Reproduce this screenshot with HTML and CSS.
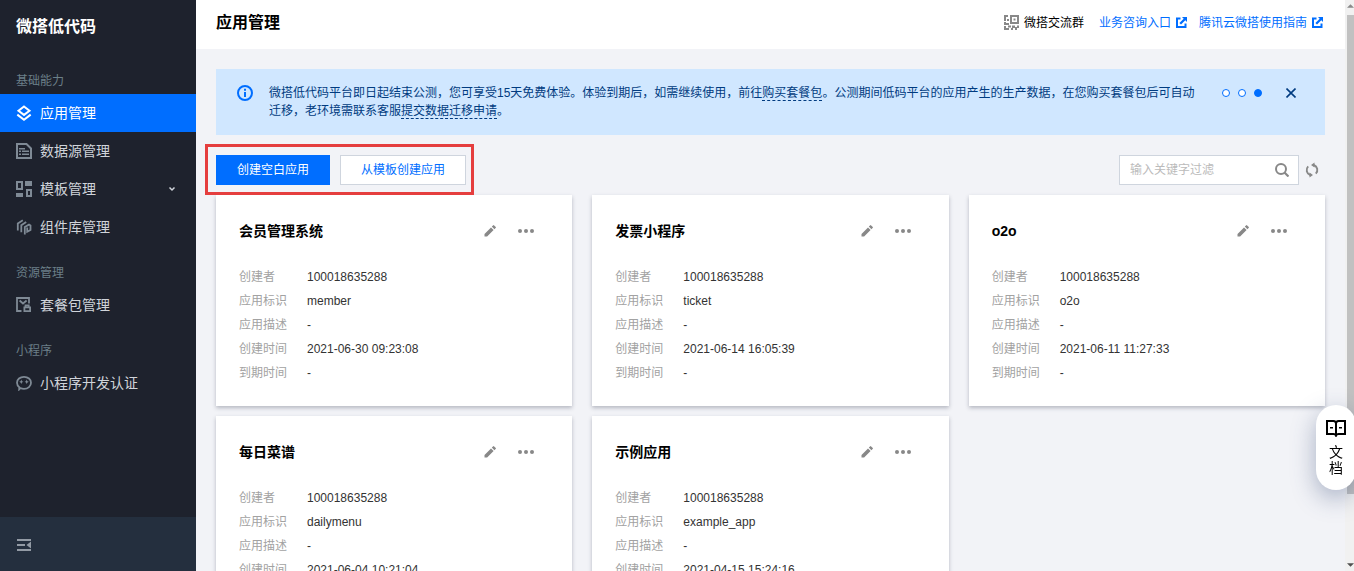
FILE: index.html
```html
<!DOCTYPE html>
<html lang="zh-CN">
<head>
<meta charset="utf-8">
<title>应用管理 - 微搭低代码</title>
<link rel="stylesheet" href="styles.css">
</head>
<body>
<svg class="sprite" aria-hidden="true">
  <symbol id="i-pencil" viewBox="0 0 12 12"><path d="M.5 11.5v-2.6L7 2.4 9.6 5 3.1 11.5zM7.8 1.6 9.3.2q.3-.3.6 0l1.9 1.9q.3.3 0 .6l-1.4 1.5z"/></symbol>
  <symbol id="i-more" viewBox="0 0 16 4"><circle cx="2" cy="2" r="2"/><circle cx="8" cy="2" r="2"/><circle cx="14" cy="2" r="2"/></symbol>
  <symbol id="i-external" viewBox="0 0 11 11"><path d="M0 .5h4.500v2H2v6.500h6.500V6.500h2V11H0zM6 0h5v5L9.300 3.300 5 7.600 3.400 6l4.300-4.300z"/></symbol>
</svg>
<div class="app">
  <aside class="sidebar">
    <h1 class="brand">微搭低代码</h1>
    <nav class="nav">
      <h2 class="nav-label">基础能力</h2>
      <a class="nav-item active" href="#"><svg class="nav-icon" viewBox="0 0 16 16"><g fill="none" stroke="currentColor" stroke-width="2"><path d="M8 1.500 13.500 5.700 8 9.900 2.500 5.700z"/><path d="M1.300 9.600 8 14.700l6.700-5.100"/></g></svg>应用管理</a>
      <a class="nav-item" href="#"><svg class="nav-icon" viewBox="0 0 16 16"><path d="M1 1h9.500L15 5.500V15H1z" fill="none" stroke="currentColor" stroke-width="2"/><path d="M3 5h6v1.500H3zM3 7.500h2V9H3zM6 7.500h7V9H6zM3 10.500h2V12H3zM6 10.500h7V12H6z"/></svg>数据源管理</a>
      <a class="nav-item" href="#"><svg class="nav-icon" viewBox="0 0 16 16"><path d="M1 1h5v7H1zM11 9h4v6h-4z" fill="none" stroke="currentColor" stroke-width="2"/><path d="M9 0h7v5H9zM0 12h7v4H0z"/></svg>模板管理<svg class="chevron" viewBox="0 0 8 8"><path d="m1.500 2.500 2.500 2.500 2.500-2.500" fill="none" stroke="currentColor" stroke-width="1.500"/></svg></a>
      <a class="nav-item" href="#"><svg class="nav-icon" viewBox="0 0 16 16"><g fill="none" stroke="currentColor" stroke-width="1.800"><path d="M1.800 11.500V4.500L6.800 1.300M5.300 13.300V6.300l4.900-3.300M8.800 15.500V8l4.200-2.400 1.500.9v4.500l-3.300 1.800V8.500"/></g></svg>组件库管理</a>
      <h2 class="nav-label">资源管理</h2>
      <a class="nav-item" href="#"><svg class="nav-icon" viewBox="0 0 16 16"><g fill="none" stroke="currentColor" stroke-width="1.800"><path d="M5.500 14H1V1h12v5.500M3.600 3.500 7 6.500l3.600-3"/><path d="M8.400 10.400h5.700v3.700H8.400zM9.500 10V8.400h3.200V10"/></g></svg>套餐包管理</a>
      <h2 class="nav-label">小程序</h2>
      <a class="nav-item" href="#"><svg class="nav-icon" viewBox="0 0 16 16"><path d="M3.200 14.300 4.400 13c1 .5 2.200.8 3.600.8 4 0 7-2.600 7-6s-3-6-7-6-7 2.600-7 6c0 1.800.9 3.300 2.300 4.400z" fill="none" stroke="currentColor" stroke-width="1.800"/><path d="M5.300 4.600 6 6.200l1.400.6L6 7.400l-.7 1.600-.7-1.600-1.400-.6 1.400-.6zM10.700 4.600l.7 1.600 1.400.6-1.400.6-.7 1.600-.7-1.600-1.400-.6 1.400-.6z"/></svg>小程序开发认证</a>
    </nav>
    <div class="sidebar-foot">
      <button class="icon-btn" aria-label="收起菜单"><svg class="fold" viewBox="0 0 14 12"><path d="M0 0h14v2H0zM0 5h8v2H0zM0 10h14v2H0zM14 2.500v7L9.500 6z"/></svg></button>
    </div>
  </aside>

  <main class="main">
    <header class="topbar">
      <h2 class="page-title">应用管理</h2>
      <div class="top-links">
        <a class="top-link plain" href="#"><svg class="qr" viewBox="0 0 15 15"><path d="M0 0h4v2H2v4H0zM0 7h2v1h3v2H0zM6 0h9v9H6zm2 2v5h5V2zM9.500 3.500h2v2h-2zM3 4h2v2H3zM0 11h2v2h3v2H0zM4 10.500h3v2H4zM8 10.500h3V12h2v-1.500h2V13h-2v2h-2v-2H9v2H7v-2h1z" fill-rule="evenodd"/></svg>微搭交流群</a>
        <a class="top-link" href="#">业务咨询入口<svg class="ext"><use href="#i-external"/></svg></a>
        <a class="top-link" href="#">腾讯云微搭使用指南<svg class="ext"><use href="#i-external"/></svg></a>
      </div>
    </header>

    <div class="content">
      <section class="notice">
        <svg class="info" viewBox="0 0 16 16"><circle cx="8" cy="8" r="7" fill="none" stroke="currentColor" stroke-width="2"/><path d="M7 3.800h2v2H7zM7 7h2v5H7z"/></svg>
        <p class="notice-text">微搭低代码平台即日起结束公测，您可享受15天免费体验。体验到期后，如需继续使用，前往<a href="#">购买套餐包</a>。公测期间低码平台的应用产生的生产数据，在您购买套餐包后可自动迁移，老环境需联系客服<a href="#">提交数据迁移申请</a>。</p>
        <div class="dots">
          <button class="dot" aria-label="第1条"></button>
          <button class="dot" aria-label="第2条"></button>
          <button class="dot on" aria-label="第3条"></button>
        </div>
        <button class="icon-btn close" aria-label="关闭"><svg viewBox="0 0 10 10"><path d="m.5.5 9 9m0-9-9 9" fill="none" stroke="currentColor" stroke-width="1.600"/></svg></button>
      </section>

      <div class="toolbar">
        <div class="create-group">
          <button class="btn primary">创建空白应用</button>
          <button class="btn">从模板创建应用</button>
        </div>
        <div class="search-group">
          <div class="search">
            <input type="search" aria-label="输入关键字过滤" placeholder="输入关键字过滤">
            <button class="icon-btn" aria-label="搜索"><svg class="lens" viewBox="0 0 14 14"><circle cx="6" cy="6" r="5" fill="none" stroke="currentColor" stroke-width="2"/><path d="m9.500 9.500 4 4" stroke="currentColor" stroke-width="2.200"/></svg></button>
          </div>
          <button class="icon-btn refresh" aria-label="刷新"><svg viewBox="0 0 14 16"><path d="M5.200 13A5.200 5.200 0 0 1 3.200 4.400M8.800 3a5.200 5.200 0 0 1 2 8.600" fill="none" stroke="currentColor" stroke-width="1.900"/><path d="M4.500.5v5.100L8 2.900zM9.500 15.500v-5.100L6 13.100z" transform="matrix(-1 0 0 1 14 0)"/></svg></button>
        </div>
      </div>

      <div class="cards">
        <article class="card">
          <div class="card-head"><h3>会员管理系统</h3><button class="icon-btn" aria-label="编辑"><svg class="pencil"><use href="#i-pencil"/></svg></button><button class="icon-btn" aria-label="更多"><svg class="more"><use href="#i-more"/></svg></button></div>
          <dl><dt>创建者</dt><dd>100018635288</dd><dt>应用标识</dt><dd>member</dd><dt>应用描述</dt><dd>-</dd><dt>创建时间</dt><dd>2021-06-30 09:23:08</dd><dt>到期时间</dt><dd>-</dd></dl>
        </article>
        <article class="card">
          <div class="card-head"><h3>发票小程序</h3><button class="icon-btn" aria-label="编辑"><svg class="pencil"><use href="#i-pencil"/></svg></button><button class="icon-btn" aria-label="更多"><svg class="more"><use href="#i-more"/></svg></button></div>
          <dl><dt>创建者</dt><dd>100018635288</dd><dt>应用标识</dt><dd>ticket</dd><dt>应用描述</dt><dd>-</dd><dt>创建时间</dt><dd>2021-06-14 16:05:39</dd><dt>到期时间</dt><dd>-</dd></dl>
        </article>
        <article class="card">
          <div class="card-head"><h3>o2o</h3><button class="icon-btn" aria-label="编辑"><svg class="pencil"><use href="#i-pencil"/></svg></button><button class="icon-btn" aria-label="更多"><svg class="more"><use href="#i-more"/></svg></button></div>
          <dl><dt>创建者</dt><dd>100018635288</dd><dt>应用标识</dt><dd>o2o</dd><dt>应用描述</dt><dd>-</dd><dt>创建时间</dt><dd>2021-06-11 11:27:33</dd><dt>到期时间</dt><dd>-</dd></dl>
        </article>
        <article class="card">
          <div class="card-head"><h3>每日菜谱</h3><button class="icon-btn" aria-label="编辑"><svg class="pencil"><use href="#i-pencil"/></svg></button><button class="icon-btn" aria-label="更多"><svg class="more"><use href="#i-more"/></svg></button></div>
          <dl><dt>创建者</dt><dd>100018635288</dd><dt>应用标识</dt><dd>dailymenu</dd><dt>应用描述</dt><dd>-</dd><dt>创建时间</dt><dd>2021-06-04 10:21:04</dd></dl>
        </article>
        <article class="card">
          <div class="card-head"><h3>示例应用</h3><button class="icon-btn" aria-label="编辑"><svg class="pencil"><use href="#i-pencil"/></svg></button><button class="icon-btn" aria-label="更多"><svg class="more"><use href="#i-more"/></svg></button></div>
          <dl><dt>创建者</dt><dd>100018635288</dd><dt>应用标识</dt><dd>example_app</dd><dt>应用描述</dt><dd>-</dd><dt>创建时间</dt><dd>2021-04-15 15:24:16</dd></dl>
        </article>
      </div>
    </div>
  </main>

  <div class="scrollbar" aria-hidden="true">
    <svg class="arrow" viewBox="0 0 8 4"><path d="M4 0l4 4H0z" fill="#8a8a8a"/></svg>
    <div class="thumb"></div>
    <svg class="arrow" viewBox="0 0 8 4"><path d="M4 4l4-4H0z" fill="#505050"/></svg>
  </div>
</div>

<a class="docs" href="#">
  <svg viewBox="0 0 20 17"><path d="M10 3.500V15M1 1h6.500Q10 1 10 3.500 10 1 12.500 1H19v13h-6.500q-2 0-2.500 1.500Q9.500 14 7.500 14H1z" fill="none" stroke="currentColor" stroke-width="2"/><path d="M4 7h3v1.600H4zM13 7h3v1.600h-3z"/></svg>
  <span>文</span><span>档</span>
</a>
</body>
</html>
```
FILE: styles.css
```css
* { box-sizing: border-box; }

body {
  margin: 0;
  background: #f2f3f7;
  color: #000;
  font: 12px/18px "Liberation Sans", "Noto Sans CJK SC", sans-serif;
}

h1, h2, h3, p, dl, dd { margin: 0; }
a { color: inherit; text-decoration: none; }
svg { fill: currentColor; flex: none; }
button, input { font: inherit; color: inherit; }
.sprite { display: none; }

.icon-btn {
  display: flex;
  align-items: center;
  justify-content: center;
  width: 24px;
  height: 24px;
  padding: 0;
  border: 0;
  background: none;
  color: #888;
}

.app {
  display: flex;
  height: 100vh;
  overflow: hidden;
}

/* Sidebar */
.sidebar {
  display: flex;
  flex-direction: column;
  flex: none;
  width: 196px;
  background: #1e222d;
}
.brand {
  padding: 2px 0 2px 16px;
  font-size: 16px;
  line-height: 50px;
  color: #fff;
}
.nav { flex: 1; min-height: 0; overflow: hidden; }
.nav-label {
  padding: 17px 16px 3px;
  font-size: 12px;
  font-weight: 400;
  line-height: 20px;
  color: #6b7f88;
}
.nav-item {
  display: flex;
  align-items: center;
  height: 38px;
  padding: 0 20px 0 16px;
  font-size: 14px;
  color: #d0d4da;
}
.nav-icon {
  width: 16px;
  height: 16px;
  margin-right: 8px;
  color: #7f8a95;
}
.nav-item.active { background: #006eff; color: #fff; }
.nav-item.active .nav-icon { color: #fff; }
.chevron { width: 8px; height: 8px; margin-left: auto; }
.sidebar-foot {
  display: flex;
  align-items: center;
  height: 54px;
  padding: 2px 0 0 12px;
  background: #242f3e;
}
.fold { width: 14px; height: 12px; color: #939ba5; }

/* Top bar */
.main {
  flex: 1;
  min-width: 0;
}
.topbar {
  display: flex;
  align-items: center;
  justify-content: space-between;
  height: 49px;
  padding: 0 22px 4px 20px;
  background: #fff;
}
.page-title { font-size: 16px; line-height: 24px; }
.top-links { display: flex; gap: 12px; }
.top-link {
  display: flex;
  align-items: center;
  gap: 5px;
  color: #006eff;
}
.top-link.plain { margin-right: 3px; color: #000; }
.qr { width: 15px; height: 15px; color: #888; }
.ext { width: 11px; height: 11px; }

.content { padding: 20px; }

/* Notice */
.notice {
  display: flex;
  align-items: flex-start;
  padding: 15px 22px 15px 21px;
  background: #d0e7ff;
  color: #003b80;
}
.info {
  width: 16px;
  height: 16px;
  margin: 1px 16px 0 0;
  color: #006eff;
}
.notice-text { flex: 1; }
.notice-text a { border-bottom: 1px dashed #003b80; }
.dots {
  display: flex;
  gap: 8px;
  padding: 5px 17px 0 20px;
}
.dot {
  width: 8px;
  height: 8px;
  padding: 0;
  border: 1px solid #006eff;
  border-radius: 50%;
  background: #fff;
}
.dot.on { background: #006eff; }
.close { height: 18px; color: #003b80; }
.close svg { width: 10px; height: 10px; }

/* Toolbar */
.toolbar {
  display: flex;
  justify-content: space-between;
  margin: 20px 0 10px;
}
.create-group {
  position: relative;
  display: flex;
  gap: 10px;
}
.create-group::after {
  content: "";
  position: absolute;
  inset: -11px -8px -10px -11px;
  border: 3px solid #e53e3e;
  pointer-events: none;
  z-index: 1;
}
.btn {
  height: 30px;
  padding: 0 20px;
  border: 1px solid #cfd5de;
  background: #fff;
  color: #006eff;
}
.btn.primary {
  border-color: #006eff;
  background: #006eff;
  color: #fff;
}
.search-group, .search { display: flex; align-items: center; }
.search {
  width: 180px;
  height: 30px;
  padding: 0 4px 0 10px;
  border: 1px solid #cfd5de;
  background: #fff;
}
.search input {
  flex: 1;
  min-width: 0;
  padding: 0;
  border: 0;
  outline: 0;
  background: none;
}
.search input::placeholder { color: #bbb; }
.lens { width: 14px; height: 14px; }
.refresh { width: 26px; }
.refresh svg { width: 14px; height: 16px; }

/* Cards */
.cards {
  display: grid;
  grid-template-columns: repeat(3, minmax(0, 1fr));
  gap: 10px 20px;
}
.card {
  padding: 24px 34px 21px 23px;
  background: #fff;
  box-shadow: 0 2px 4px rgba(54, 58, 80, .32);
}
.card-head {
  display: flex;
  align-items: center;
  gap: 12px;
  margin-bottom: 22px;
}
.card-head h3 { flex: 1; font-size: 14px; line-height: 24px; }
.pencil { width: 12px; height: 12px; }
.more { width: 16px; height: 4px; }
dl {
  display: grid;
  grid-template-columns: 68px 1fr;
  line-height: 24px;
}
dt { color: #a2a2a2; }
dd { color: #333; }

/* Page scrollbar */
.scrollbar {
  display: flex;
  flex-direction: column;
  align-items: flex-end;
  flex: none;
  width: 9px;
  padding: 4px 0;
  background: #f1f1f1;
}
.arrow { width: 7px; height: 4px; }
.thumb {
  width: 7px;
  height: 85%;
  margin: 7px 0 auto;
  background: #c1c1c1;
}

/* Floating docs entry */
.docs {
  position: fixed;
  right: -2px;
  bottom: 81px;
  display: flex;
  flex-direction: column;
  align-items: center;
  width: 40px;
  padding: 15px 0 14px;
  border-radius: 20px;
  background: #fff;
  box-shadow: 0 8px 24px rgba(54, 75, 120, .4);
  font-size: 14px;
  line-height: 16px;
}
.docs svg { width: 20px; height: 17px; margin-bottom: 7px; }
```
